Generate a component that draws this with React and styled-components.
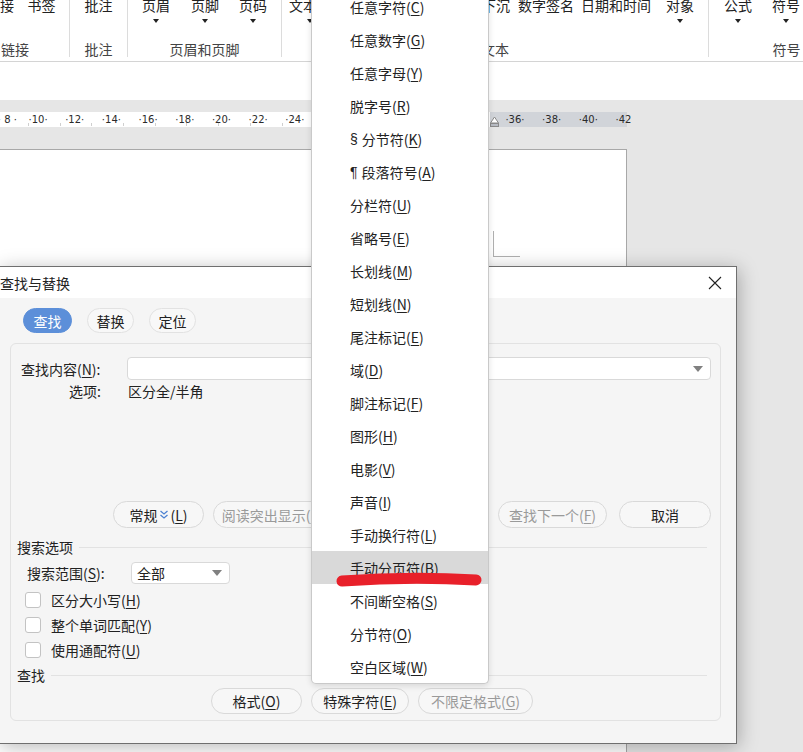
import React from "react";
import styled, { createGlobalStyle } from "styled-components";

const FONT = `"Noto Sans CJK SC", "Noto Sans", sans-serif`;

const Global = createGlobalStyle`
  html, body { margin: 0; padding: 0; background: #e6e6e6; }
  body { font-family: ${FONT}; color: #222; }
  * { box-sizing: border-box; }
  u { text-decoration: underline; text-underline-offset: 2px; text-decoration-thickness: 1px; }
`;

const Screen = styled.div`
  position: relative;
  width: 803px;
  height: 752px;
  overflow: hidden;
  background: #e6e6e6;
  display: flex;
  flex-direction: column;
  font-family: ${FONT};
  font-size: 14px;
  color: #222;
`;

/* ---------- Ribbon ---------- */
const Ribbon = styled.div`
  display: flex;
  flex-shrink: 0;
  height: 62px;
  background: #fff;
  border-bottom: 1px solid #d4d4d4;
`;

const Group = styled.div`
  flex: 0 0 ${(p) => p.$w}px;
  margin-left: ${(p) => p.$ml || 0}px;
  height: 57px;
  border-right: ${(p) => (p.$last ? "none" : "1px solid #dcdcdc")};
  display: flex;
  flex-direction: column;
  justify-content: space-between;
`;

const GroupButtons = styled.div`
  display: flex;
  padding-left: ${(p) => p.$pl || 0}px;
`;

const RibbonBtn = styled.div`
  flex: 0 0 ${(p) => p.$w}px;
  display: flex;
  flex-direction: column;
  align-items: center;
  line-height: 15px;
  margin-top: -2px;
  white-space: nowrap;
`;

const DropArrow = styled.span`
  margin-top: 6px;
  width: 0;
  height: 0;
  border-left: 3px solid transparent;
  border-right: 3px solid transparent;
  border-top: 4px solid #222;
`;

const GroupLabel = styled.div`
  text-align: center;
  line-height: 15px;
  color: #444;
  white-space: nowrap;
`;

const TopBlank = styled.div`
  flex: 0 0 38px;
  background: #fff;
`;

/* ---------- Document area ---------- */
const DocArea = styled.div`
  flex: 1;
  display: flex;
  flex-direction: column;
  padding-top: 12px;
  background: #e6e6e6;
`;

const RulerRow = styled.div`
  position: relative;
  height: 15px;
  flex-shrink: 0;
`;

const RulerTrack = styled.div`
  display: flex;
  width: 644px;
  height: 15px;
  margin-left: -17px;
  background: linear-gradient(
    to right,
    #ffffff 0,
    #ffffff 507px,
    #d1d4d9 507px,
    #d1d4d9 644px
  );
  position: relative;
  &::after {
    content: "";
    position: absolute;
    left: 45px;
    width: 460px;
    bottom: 1px;
    height: 3px;
    background: repeating-linear-gradient(
      to right,
      #cfcfcf 0,
      #cfcfcf 1px,
      transparent 1px,
      transparent 31.7px
    );
  }
`;

const RulerCell = styled.span`
  flex: 0 0 36.7px;
  text-align: center;
  font-family: "DejaVu Sans", "Liberation Sans", sans-serif;
  font-size: 10px;
  line-height: 15px;
  color: #2a2a2a;
  white-space: pre;
  transform: ${(p) => (p.$first ? "translateX(6px)" : "none")};
`;

const IndentMarker = styled.svg`
  position: absolute;
  left: 490px;
  top: 4px;
`;

const Page = styled.div`
  position: relative;
  flex: 1;
  margin-top: 22px;
  margin-left: -1px;
  width: 628px;
  background: #fff;
  border-top: 1px solid #a8a8a8;
  border-right: 1px solid #a8a8a8;
`;

const CropMark = styled.div`
  position: absolute;
  left: 494px;
  top: 81px;
  width: 27px;
  height: 26px;
  border-left: 1px solid #b0b0b0;
  border-bottom: 1px solid #b0b0b0;
`;

/* ---------- Dialog ---------- */
const Dialog = styled.div`
  position: absolute;
  left: -1px;
  top: 266px;
  width: 738px;
  height: 478px;
  border: 1px solid #6f6f6f;
  background: #f5f5f5;
  box-shadow: 2px 3px 18px rgba(0, 0, 0, 0.28);
  display: flex;
  flex-direction: column;
`;

const TitleBar = styled.div`
  flex: 0 0 31px;
  background: #fff;
  display: flex;
  align-items: center;
  justify-content: space-between;
  padding: 0 14px 0 0;
`;

const Title = styled.span`
  font-size: 14px;
  line-height: 16px;
  margin-top: 0;
`;

const DialogBody = styled.div`
  flex: 1;
  display: flex;
  flex-direction: column;
  padding: 10px 15px 22px 10px;
`;

const Tabs = styled.div`
  display: flex;
  gap: 15px;
  margin-left: 13px;
  height: 25px;
`;

const Tab = styled.div`
  width: ${(p) => p.$w}px;
  height: 25px;
  border-radius: 13px;
  border: 1px solid ${(p) => (p.$active ? "#5c8fd9" : "#e2e2e2")};
  background: ${(p) => (p.$active ? "#5c8fd9" : "#f8f8f8")};
  color: ${(p) => (p.$active ? "#fff" : "#222")};
  display: flex;
  align-items: center;
  justify-content: center;
  line-height: 16px;
`;

const Panel = styled.div`
  flex: 1;
  margin-top: 10px;
  width: 711px;
  border: 1px solid #e2e2e2;
  border-radius: 6px;
  display: flex;
  flex-direction: column;
  padding: 13px 9px 6px 0;
`;

const FieldRow = styled.div`
  display: grid;
  grid-template-columns: ${(p) => p.$col}px 1fr;
  align-items: center;
  padding-left: ${(p) => p.$pl}px;
  height: ${(p) => p.$h}px;
  margin-top: ${(p) => p.$mt || 0}px;
  line-height: 16px;
  white-space: nowrap;
`;

const ComboInput = styled.div`
  height: 23px;
  background: #fff;
  border: 1px solid #d9d9d9;
  border-radius: 4px;
  display: flex;
  align-items: center;
  justify-content: flex-end;
  padding-right: 7px;
`;

const Caret = styled.span`
  width: 0;
  height: 0;
  border-left: 5px solid transparent;
  border-right: 5px solid transparent;
  border-top: 6px solid #808080;
`;

const ButtonRow = styled.div`
  display: flex;
  justify-content: ${(p) => (p.$end ? "flex-end" : "flex-start")};
  gap: 9px;
  margin-top: ${(p) => p.$mt}px;
  padding-left: ${(p) => p.$pl || 0}px;
`;

const PillButton = styled.div`
  flex: 0 0 ${(p) => p.$w}px;
  height: ${(p) => p.$h || 27}px;
  margin-left: ${(p) => p.$ml || 0}px;
  border-radius: 14px;
  border: 1px solid #d9d9d9;
  background: #f7f7f7;
  color: ${(p) => (p.$disabled ? "#9a9a9a" : "#222")};
  display: flex;
  align-items: center;
  justify-content: center;
  line-height: 16px;
  white-space: nowrap;
`;

const SectionHeader = styled.div`
  display: flex;
  align-items: center;
  height: 16px;
  margin-top: ${(p) => p.$mt}px;
  padding: 0 4px 0 6px;
  line-height: 16px;
  white-space: nowrap;
  &::after {
    content: "";
    flex: 1;
    height: 1px;
    margin-left: 6px;
    background: #e2e2e2;
  }
`;

const SelectBox = styled.div`
  width: 99px;
  height: 22px;
  background: #fff;
  border: 1px solid #d9d9d9;
  border-radius: 4px;
  display: flex;
  align-items: center;
  justify-content: space-between;
  padding: 0 7px 0 5px;
`;

const CheckList = styled.div`
  display: flex;
  flex-direction: column;
  margin-top: 3px;
`;

const CheckRow = styled.div`
  height: 25px;
  display: flex;
  align-items: center;
  gap: 10px;
  padding-left: 14px;
  line-height: 16px;
`;

const CheckBox = styled.span`
  width: 16px;
  height: 16px;
  border: 1px solid #c3c3c3;
  border-radius: 3px;
  background: #fff;
`;

/* ---------- Menu ---------- */
const Menu = styled.div`
  position: absolute;
  left: 311px;
  top: -10px;
  width: 178px;
  background: #fff;
  border: 1px solid #c9c9c9;
  border-top: none;
  border-radius: 0 0 5px 5px;
  box-shadow: 0 2px 6px rgba(0, 0, 0, 0.12);
  display: flex;
  flex-direction: column;
`;

const MenuItem = styled.div`
  height: 33px;
  display: flex;
  align-items: center;
  padding-left: 38px;
  background: ${(p) => (p.$active ? "#d9d9d9" : "transparent")};
  color: #222;
  line-height: 16px;
  white-space: nowrap;
`;

const Sym = styled.span`
  font-family: "Liberation Sans", Arial, sans-serif;
  margin-right: 4px;
`;

const RedMark = styled.svg`
  position: absolute;
  left: 330px;
  top: 568px;
  pointer-events: none;
`;

/* ---------- Data ---------- */
const ribbonGroups = [
  {
    w: 109, ml: -39, pl: 12, label: "链接",
    btns: [{ t: "链接", w: 54 }, { t: "书签", w: 29 }],
  },
  { w: 58, pl: 0, label: "批注", btns: [{ t: "批注", w: 57 }] },
  {
    w: 154, pl: 0, label: "页眉和页脚",
    btns: [
      { t: "页眉", w: 56, a: true },
      { t: "页脚", w: 42, a: true },
      { t: "页码", w: 54, a: true },
    ],
  },
  {
    w: 427, pl: 7, label: "文本",
    btns: [
      { t: "文本框", w: 42, a: true },
      { t: "文档部件", w: 62, a: true },
      { t: "艺术字", w: 56, a: true },
      { t: "首字下沉", w: 66 },
      { t: "数字签名", w: 62 },
      { t: "日期和时间", w: 78 },
      { t: "对象", w: 50, a: true },
    ],
  },
  {
    w: 155, pl: 5, label: "符号", last: true,
    btns: [
      { t: "公式", w: 48, a: true },
      { t: "符号", w: 48, a: true },
    ],
  },
];

const rulerNums = [];
for (let n = 8; n <= 42; n += 2) rulerNums.push(n);

const menuItems = [
  ["任意字符", "C"],
  ["任意数字", "G"],
  ["任意字母", "Y"],
  ["脱字号", "R"],
  ["分节符", "K", "§"],
  ["段落符号", "A", "¶"],
  ["分栏符", "U"],
  ["省略号", "E"],
  ["长划线", "M"],
  ["短划线", "N"],
  ["尾注标记", "E"],
  ["域", "D"],
  ["脚注标记", "F"],
  ["图形", "H"],
  ["电影", "V"],
  ["声音", "I"],
  ["手动换行符", "L"],
  ["手动分页符", "B"],
  ["不间断空格", "S"],
  ["分节符", "O"],
  ["空白区域", "W"],
];

const Acc = ({ k }) => (
  <>
    (<u>{k}</u>)
  </>
);

const ExpandIcon = () => (
  <svg width="10" height="11" viewBox="0 0 10 11" style={{ margin: "0 1px 0 2px" }}>
    <path d="M1.5 2 L5 5 L8.5 2 M1.5 6 L5 9 L8.5 6" fill="none" stroke="#4d82d2" strokeWidth="1.3" />
  </svg>
);

export default function App() {
  return (
    <>
      <Global />
      <Screen>
        <Ribbon>
          {ribbonGroups.map((g, i) => (
            <Group key={i} $w={g.w} $ml={g.ml} $last={g.last}>
              <GroupButtons $pl={g.pl}>
                {g.btns.map((b, j) => (
                  <RibbonBtn key={j} $w={b.w}>
                    <span>{b.t}</span>
                    {b.a && <DropArrow />}
                  </RibbonBtn>
                ))}
              </GroupButtons>
              <GroupLabel>{g.label}</GroupLabel>
            </Group>
          ))}
        </Ribbon>
        <TopBlank />
        <DocArea>
          <RulerRow>
            <RulerTrack>
              {rulerNums.map((n) => (
                <RulerCell key={n} $first={n === 8}>
                  {n < 10 ? `· ${n} ·` : n === 42 ? `·${n} ` : `·${n}·`}
                </RulerCell>
              ))}
            </RulerTrack>
            <IndentMarker width="9" height="11" viewBox="0 0 9 11">
              <path d="M0.5 7 L4.5 1 L8.5 7 Z" fill="#fff" stroke="#8a8a8a" strokeWidth="1" />
              <rect x="0.5" y="7.5" width="8" height="3" fill="#b8bcc4" stroke="#8a8a8a" strokeWidth="1" />
            </IndentMarker>
          </RulerRow>
          <Page>
            <CropMark />
          </Page>
        </DocArea>

        <Dialog>
          <TitleBar>
            <Title>查找与替换</Title>
            <svg width="14" height="14" viewBox="0 0 14 14">
              <path d="M1 1 L13 13 M13 1 L1 13" stroke="#222" strokeWidth="1.1" />
            </svg>
          </TitleBar>
          <DialogBody>
            <Tabs>
              <Tab $w={49} $active>查找</Tab>
              <Tab $w={47}>替换</Tab>
              <Tab $w={47}>定位</Tab>
            </Tabs>
            <Panel>
              <FieldRow $pl={10} $col={106} $h={23}>
                <span>
                  查找内容<Acc k="N" />:
                </span>
                <ComboInput>
                  <Caret />
                </ComboInput>
              </FieldRow>
              <FieldRow $pl={58} $col={59} $h={16} $mt={3}>
                <span>选项:</span>
                <span>区分全/半角</span>
              </FieldRow>
              <ButtonRow $end $mt={102}>
                <PillButton $w={91}>
                  常规<ExpandIcon />(<u>L</u>)
                </PillButton>
                <PillButton $w={120} $disabled>
                  阅读突出显示(<u>R</u>)
                </PillButton>
                <PillButton $w={147} $disabled>
                  在以下范围中查找(<u>I</u>)
                </PillButton>
                <PillButton $w={109} $disabled>
                  查找下一个(<u>F</u>)
                </PillButton>
                <PillButton $w={92} $ml={3}>
                  取消
                </PillButton>
              </ButtonRow>
              <SectionHeader $mt={11}>搜索选项</SectionHeader>
              <FieldRow $pl={16} $col={104} $h={22} $mt={7}>
                <span>
                  搜索范围<Acc k="S" />:
                </span>
                <SelectBox>
                  <span>全部</span>
                  <Caret />
                </SelectBox>
              </FieldRow>
              <CheckList>
                <CheckRow>
                  <CheckBox />
                  <span>
                    区分大小写<Acc k="H" />
                  </span>
                </CheckRow>
                <CheckRow>
                  <CheckBox />
                  <span>
                    整个单词匹配<Acc k="Y" />
                  </span>
                </CheckRow>
                <CheckRow>
                  <CheckBox />
                  <span>
                    使用通配符<Acc k="U" />
                  </span>
                </CheckRow>
              </CheckList>
              <SectionHeader $mt={5}>查找</SectionHeader>
              <ButtonRow $mt={5} $pl={200}>
                <PillButton $w={91} $h={26}>
                  格式<Acc k="O" />
                </PillButton>
                <PillButton $w={98} $h={26}>
                  特殊字符<Acc k="E" />
                </PillButton>
                <PillButton $w={115} $h={26} $disabled>
                  不限定格式<Acc k="G" />
                </PillButton>
              </ButtonRow>
            </Panel>
          </DialogBody>
        </Dialog>

        <Menu>
          {menuItems.map(([t, k, s], i) => (
            <MenuItem key={i} $active={i === 17}>
              {s && <Sym>{s}</Sym>}
              {t}
              <Acc k={k} />
            </MenuItem>
          ))}
        </Menu>

        <RedMark width="160" height="26" viewBox="0 0 160 26">
          <path d="M12 13 Q 80 8 146 12" fill="none" stroke="#e8202a" strokeWidth="11" strokeLinecap="round" />
        </RedMark>
      </Screen>
    </>
  );
}
